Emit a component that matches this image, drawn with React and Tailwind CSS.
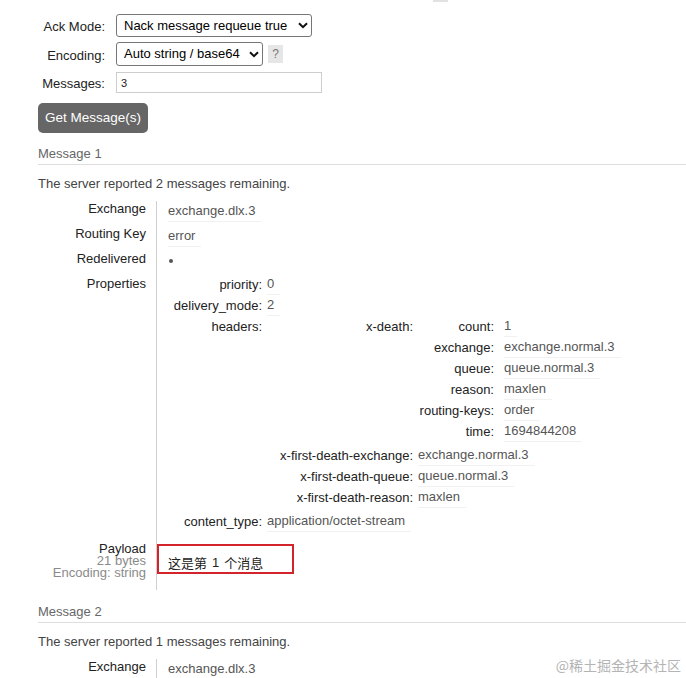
import React from 'react';

const Chevron = () => (
  <svg width="10" height="7" viewBox="0 0 10 7" className="shrink-0">
    <path d="M1 1.2 L5 5.2 L9 1.2" fill="none" stroke="#111" strokeWidth="2" />
  </svg>
);

const Val = ({ children }) => (
  <span className="inline-block border-b border-[#f1f1f1] pr-[6px] leading-[20px] text-[#555]">{children}</span>
);

// one row of a nested "mini" table
const Mini = ({ label, w, gap, children }) => (
  <div className="flex">
    <div className={`${w} shrink-0 text-right text-[#222] leading-[21px]`}>{label}</div>
    <div className={`${gap} flex items-start`}>{children}</div>
  </div>
);

const Row = ({ label, children, h = 'h-[25px]', valueCls = 'pl-[11px]' }) => (
  <div className={`flex ${h}`}>
    <div className="w-[118px] shrink-0 pr-[10px] text-right text-[#222] leading-[16px]">{label}</div>
    <div className={`flex-1 border-l border-[#cfcfcf] ${valueCls}`}>{children}</div>
  </div>
);

const MsgHead = ({ n, remaining, mt }) => (
  <>
    <div className={`${mt} border-b border-[#dedede] pb-[2px] leading-[16px] text-[#666]`}>Message {n}</div>
    <div className="mt-[11px] leading-[16px] text-[#444]">
      The server reported {remaining} messages remaining.
    </div>
  </>
);

export default function App() {
  return (
    <div className="relative w-[686px] h-[678px] overflow-hidden bg-white text-[13px] leading-[16px] font-['Liberation_Sans',Arial,'Noto_Sans_CJK_SC',sans-serif]">
      <div className="ml-[433px] h-[2px] w-[15px] bg-[#e2e2e2]" />

      <div className="pl-[38px]">
        {/* form */}
        <div className="mt-[12px] flex h-[23px] items-center">
          <div className="w-[67px] pt-[3px] text-right text-[#222]">Ack Mode:</div>
          <div className="ml-[11px] flex h-[23px] w-[196px] items-center justify-between rounded-[3px] border border-[#767676] pl-[7px] pr-[3px] text-black">
            <span>Nack message requeue true</span>
            <Chevron />
          </div>
        </div>
        <div className="mt-[5px] flex h-[24px] items-center">
          <div className="w-[67px] pt-[3px] text-right text-[#222]">Encoding:</div>
          <div className="ml-[11px] flex h-[24px] w-[147px] items-center justify-between rounded-[3px] border border-[#767676] pl-[7px] pr-[3px] text-black">
            <span>Auto string / base64</span>
            <Chevron />
          </div>
          <div className="ml-[5px] flex h-[18px] w-[15px] items-center justify-center bg-[#e6e6e6] text-[12px] text-[#777]">?</div>
        </div>
        <div className="mt-[6px] flex h-[21px] items-center">
          <div className="w-[67px] pt-[3px] text-right text-[#222]">Messages:</div>
          <div className="ml-[11px] flex h-[21px] w-[206px] items-center border border-[#cdcdcd] pl-[4px] text-[11px] text-[#222]">3</div>
        </div>
        <div className="mt-[10px] flex h-[30px] w-[110px] items-center justify-center rounded-[5px] bg-[#666] text-[13.5px] text-white">
          Get Message(s)
        </div>

        <MsgHead n={1} remaining={2} mt="mt-[13px]" />

        {/* message 1 details */}
        <div className="mt-[9px]">
          <Row label="Exchange"><Val>exchange.dlx.3</Val></Row>
          <Row label="Routing Key"><Val>error</Val></Row>
          <Row label="Redelivered">
            <div className="ml-[1px] mt-[8px] h-[4px] w-[4px] rounded-full bg-[#555]" />
          </Row>
          <Row label="Properties" h="" valueCls="pl-[11px] pb-[9px]">
            <div className="-mt-[2px]">
              <Mini label="priority:" w="w-[94px]" gap="pl-[5px]"><Val>0</Val></Mini>
              <Mini label="delivery_mode:" w="w-[94px]" gap="pl-[5px]"><Val>2</Val></Mini>
              <div className="flex pb-[3px]">
                <div className="w-[94px] shrink-0 text-right text-[#222] leading-[21px]">headers:</div>
                <div className="pl-[6px]">
                  <div className="flex pb-[3px]">
                    <div className="w-[145px] shrink-0 text-right text-[#222] leading-[21px]">x-death:</div>
                    <div className="pl-[5px]">
                      <Mini label="count:" w="w-[76px]" gap="pl-[10px]"><Val>1</Val></Mini>
                      <Mini label="exchange:" w="w-[76px]" gap="pl-[10px]"><Val>exchange.normal.3</Val></Mini>
                      <Mini label="queue:" w="w-[76px]" gap="pl-[10px]"><Val>queue.normal.3</Val></Mini>
                      <Mini label="reason:" w="w-[76px]" gap="pl-[10px]"><Val>maxlen</Val></Mini>
                      <Mini label="routing-keys:" w="w-[76px]" gap="pl-[10px]"><Val>order</Val></Mini>
                      <Mini label="time:" w="w-[76px]" gap="pl-[10px]"><Val>1694844208</Val></Mini>
                    </div>
                  </div>
                  <Mini label="x-first-death-exchange:" w="w-[145px]" gap="pl-[5px]"><Val>exchange.normal.3</Val></Mini>
                  <Mini label="x-first-death-queue:" w="w-[145px]" gap="pl-[5px]"><Val>queue.normal.3</Val></Mini>
                  <Mini label="x-first-death-reason:" w="w-[145px]" gap="pl-[5px]"><Val>maxlen</Val></Mini>
                </div>
              </div>
              <Mini label="content_type:" w="w-[94px]" gap="pl-[5px]"><Val>application/octet-stream</Val></Mini>
            </div>
          </Row>
          <div className="flex h-[49px]">
            <div className="w-[118px] shrink-0 pr-[10px] pt-[2px] text-right leading-[12px]">
              <div className="text-[#222]">Payload</div>
              <div className="text-[#8a8a8a]">21 bytes</div>
              <div className="text-[#8a8a8a]">Encoding: string</div>
            </div>
            <div className="flex-1 border-l border-[#cfcfcf]">
              <div className="mt-[3px] flex h-[30px] w-[137px] items-start border-2 border-[#d3242c] pl-[9px] pt-[9px] leading-[16px] text-[#222] font-['Noto_Sans_CJK_SC',sans-serif]">
                <span>这是第</span>
                <span className="px-[5px] font-['Liberation_Sans',sans-serif]">1</span>
                <span>个消息</span>
              </div>
            </div>
          </div>
        </div>

        <MsgHead n={2} remaining={1} mt="mt-[14px]" />

        <div className="mt-[9px]">
          <Row label="Exchange"><Val>exchange.dlx.3</Val></Row>
        </div>
      </div>

      <div className="absolute bottom-[4px] right-[5px] text-[14px] leading-[18px] text-[#b4b4b4] font-['Noto_Sans_CJK_SC',sans-serif]">
        @稀土掘金技术社区
      </div>
    </div>
  );
}
